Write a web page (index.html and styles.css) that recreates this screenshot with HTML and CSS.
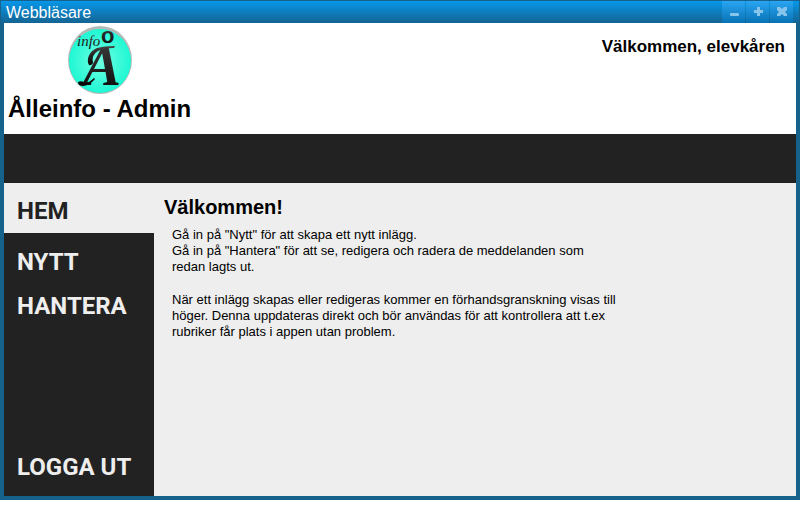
FILE: index.html
```html
<!DOCTYPE html>
<html lang="sv">
<head>
<meta charset="utf-8">
<meta name="viewport" content="width=device-width, initial-scale=1">
<title>Webbläsare</title>
<link rel="stylesheet" href="styles.css">
</head>
<body>
<div class="window">
  <div class="titlebar">
    <span class="window-title">Webbläsare</span>
    <div class="window-controls">
      <button type="button" aria-label="Minimera"><svg viewBox="0 0 23 22"><rect x="8" y="12" width="9" height="3" rx="1"/></svg></button>
      <button type="button" aria-label="Maximera"><svg viewBox="0 0 23 22"><path d="M11 6h3v3h3v3h-3v3h-3v-3h-3v-3h3z"/></svg></button>
      <button type="button" aria-label="Stäng"><svg viewBox="0 0 23 22"><path d="M7 6h3l2 2 2-2h3v3l-2 2 2 2v2h-3l-2-2-2 2H7v-2l2-2-2-2z"/></svg></button>
    </div>
  </div>
  <div class="page">
    <header class="header">
      <div class="brand">
        <svg class="logo" viewBox="0 0 64 70" role="img" aria-label="Ålleinfo">
          <defs>
            <radialGradient id="disc"><stop offset="0" stop-color="#70ffe3"/><stop offset="1" stop-color="#1ff7d3"/></radialGradient>
            <linearGradient id="ink" x1="0" y1="0" x2="0" y2="1"><stop offset="0" stop-color="#444"/><stop offset="1" stop-color="#050505"/></linearGradient>
          </defs>
          <ellipse cx="32" cy="35" rx="32" ry="34" fill="#b5b9b8"/>
          <ellipse cx="32" cy="36" rx="31" ry="32" fill="url(#disc)"/>
          <text class="logo-word" x="9" y="21">info</text>
          <text class="logo-ring" x="33" y="18">o</text>
          <text class="logo-letter" x="15" y="60">A</text>
          <path d="M21 40C18 35 21 26 29 23q7-2 18-2l-1 2q-11 0-16 3-7 4-5 12-2 3-4 2z" fill="url(#ink)"/>
          <path d="M10 57q4-2 7 1 4 0 9-5l1 1q-6 7-12 7-5 0-5-4z" fill="#090909"/>
        </svg>
        <h1>Ålleinfo - Admin</h1>
      </div>
      <p class="greeting">Välkommen, elevkåren</p>
    </header>
    <div class="band"></div>
    <div class="body">
      <nav class="sidebar">
        <a class="active" href="#hem" aria-current="page">HEM</a>
        <a href="#nytt">NYTT</a>
        <a href="#hantera">HANTERA</a>
        <a class="logout" href="#logga-ut">LOGGA UT</a>
      </nav>
      <main class="content" id="hem">
        <h2>Välkommen!</h2>
        <div class="intro">
          <p>Gå in på "Nytt" för att skapa ett nytt inlägg.<br>Gå in på "Hantera" för att se, redigera och radera de meddelanden som redan lagts ut.</p>
          <p>När ett inlägg skapas eller redigeras kommer en förhandsgranskning visas till höger. Denna uppdateras direkt och bör användas för att kontrollera att t.ex rubriker får plats i appen utan problem.</p>
        </div>
      </main>
    </div>
  </div>
</div>
</body>
</html>
```

FILE: styles.css
```css
* {
  box-sizing: border-box;
}

body {
  margin: 0;
  background: #fff;
  color: #000;
  font-family: "Liberation Sans", Arial, sans-serif;
}

h1,
h2,
p {
  margin: 0;
}

.window {
  display: flex;
  flex-direction: column;
  min-height: calc(100vh - 13px);
  background: #16628c;
}

.titlebar {
  display: flex;
  justify-content: space-between;
  height: 23px;
  padding: 0 6px 0 5px;
  border: 1px solid #16628c;
  border-bottom: 0;
  background: linear-gradient(#0797e8, #146493);
}

.window-title {
  color: #fff;
  font-size: 16px;
  line-height: 23px;
}

.window-controls {
  display: flex;
  gap: 1px;
}

.window-controls button {
  width: 23px;
  height: 22px;
  padding: 0;
  border: 0;
  background: linear-gradient(#2aa5f2, #0872b4);
}

.window-controls svg {
  display: block;
  width: 23px;
  height: 22px;
  fill: #86c5e9;
}

.page {
  display: flex;
  flex: 1;
  flex-direction: column;
  margin: 0 4px 4px;
  background: #eee;
}

.header {
  display: flex;
  justify-content: space-between;
  padding: 2px 11px 11px 4px;
  background: #fff;
}

.brand {
  display: flex;
  flex-direction: column;
  align-items: center;
}

.logo {
  width: 64px;
  height: 70px;
  overflow: visible;
}

.logo text {
  fill: url(#ink);
  font-family: "Liberation Serif", serif;
  font-style: italic;
}

.logo .logo-word {
  font-size: 15px;
}

.logo .logo-ring {
  font-family: "Liberation Sans", sans-serif;
  font-size: 22px;
  font-style: normal;
  font-weight: bold;
}

.logo .logo-letter {
  font-size: 57px;
  font-weight: bold;
}

h1 {
  font-size: 24px;
  line-height: 28px;
}

.greeting {
  padding-top: 12px;
  font-size: 17px;
  font-weight: bold;
  line-height: 20px;
}

.band {
  height: 49px;
  background: #222;
}

.body {
  display: flex;
  flex: 1;
}

.sidebar {
  display: flex;
  flex-direction: column;
  width: 150px;
  background: #222;
  font-family: Roboto, sans-serif;
  font-size: 24px;
  font-weight: 700;
  line-height: 28px;
}

.sidebar a {
  padding: 8px 13px;
  color: #eee;
  text-decoration: none;
}

.sidebar .active {
  margin-bottom: 7px;
  padding: 14px 13px 8px;
  background: #eee;
  color: #222;
}

.sidebar .logout {
  margin-top: auto;
  padding-bottom: 15px;
  white-space: nowrap;
}

.content {
  flex: 1;
  padding: 12px 10px;
}

h2 {
  font-size: 20px;
  line-height: 24px;
}

.intro {
  display: flex;
  flex-direction: column;
  gap: 17px;
  max-width: 460px;
  padding: 8px;
  font-size: 13px;
  line-height: 16px;
}
```
